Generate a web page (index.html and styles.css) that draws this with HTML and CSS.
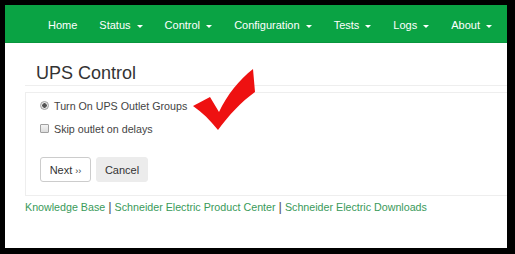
FILE: index.html
```html
<!DOCTYPE html>
<html lang="en">
<head>
    <meta charset="UTF-8">
    <meta name="viewport" content="width=device-width, initial-scale=1.0">
    <title>UPS Control</title>
    <link rel="stylesheet" href="styles.css">
</head>
<body>

    <div class="page">
        <nav class="navbar">
            <ul class="nav">
                <li><a href="#">Home</a></li>
                <li><a href="#">Status <span class="caret"></span></a></li>
                <li><a href="#">Control <span class="caret"></span></a></li>
                <li><a href="#">Configuration <span class="caret"></span></a></li>
                <li><a href="#">Tests <span class="caret"></span></a></li>
                <li><a href="#">Logs <span class="caret"></span></a></li>
                <li><a href="#">About <span class="caret"></span></a></li>
            </ul>
        </nav>

        <div class="content">
            <h1 class="page-title">UPS Control</h1>

            <form class="panel">
                <label class="option">
                    <input type="radio" name="action" checked>
                    Turn On UPS Outlet Groups
                </label>
                <label class="option">
                    <input type="checkbox">
                    Skip outlet on delays
                </label>
                <div class="actions">
                    <button type="button" class="btn btn-default">Next <span class="raquo">&rsaquo;&rsaquo;</span></button>
                    <button type="button" class="btn btn-cancel">Cancel</button>
                </div>
            </form>

            <p class="footer-links">
                <a href="#">Knowledge Base</a> <span class="sep">|</span>
                <a href="#">Schneider Electric Product Center</a> <span class="sep">|</span>
                <a href="#">Schneider Electric Downloads</a>
            </p>
        </div>

        <!-- annotation mark over the page -->
        <svg class="checkmark" width="70" height="70" viewBox="0 0 70 70">
            <path d="M0,38 L17,29 L26,44 C34,27 46,12 60,1 L62,24 C48,34 36,47 25,62 C17,52 9,44 0,38 Z" fill="#ee1111"/>
        </svg>
    </div>

</body>
</html>
```

FILE: styles.css
```css
body {
    margin: 0;
    padding: 0;
    background-color: #000;
    font-family: "Liberation Sans", Arial, sans-serif;
    font-size: 10.7px;
    color: #444;
}

.page {
    position: relative;
    margin: 5px 0 0 5px;
    width: 502px;
    height: 243px;
    background-color: #fff;
    overflow: hidden;
}

.navbar {
    height: 37px;
    background-color: #0aa344;
    border-bottom: 1px solid #09963e;
}

.nav {
    display: flex;
    list-style: none;
    margin: 0;
    padding: 0 0 0 32px;
}

.nav a {
    display: block;
    padding: 4px 11px 0 11px;
    line-height: 33px;
    font-size: 11px;
    color: #fff;
    text-decoration: none;
}

.caret {
    display: inline-block;
    width: 0;
    height: 0;
    margin-left: 3px;
    vertical-align: middle;
    border-top: 3px solid #fff;
    border-left: 3px solid transparent;
    border-right: 3px solid transparent;
}

.content {
    padding-left: 20px;
}

.page-title {
    margin: 20px 0 0 0;
    padding: 0 0 2px 11px;
    font-size: 18px;
    font-weight: normal;
    line-height: 20px;
    color: #333;
    border-bottom: 1px solid #eee;
}

.panel {
    margin: 6px -20px 0 0;
    padding: 1px 14px 13px 14px;
    border: 1px solid #eee;
    border-right: none;
}

.option {
    display: flex;
    align-items: center;
    height: 23px;
}

.option input {
    appearance: none;
    width: 9px;
    height: 9px;
    margin: 0 5px 0 0;
    border: 1px solid #a0a0a0;
    background: linear-gradient(#f4f4f4, #dcdcdc);
}

.option input[type="radio"] {
    border-radius: 50%;
}

.option input[type="radio"]:checked {
    background: radial-gradient(circle, #555 0, #555 2px, #e6e6e6 2.5px);
}

.option input[type="checkbox"] {
    border-radius: 1px;
}

.actions {
    display: flex;
    gap: 5px;
    margin-top: 17px;
}

.btn {
    height: 25px;
    padding: 0;
    font-family: inherit;
    font-size: 11px;
    color: #333;
    white-space: nowrap;
    border-radius: 3px;
    cursor: pointer;
}

.btn-default {
    width: 51px;
    background-color: #fff;
    border: 1px solid #ccc;
}

.btn-cancel {
    width: 52px;
    background-color: #ececec;
    border: 1px solid #ececec;
}

.raquo {
    font-size: 9px;
}

.footer-links {
    margin: 3px 0 0 0;
    line-height: 16px;
    color: #555;
}

.footer-links a {
    color: #3a9a5a;
    text-decoration: none;
}

.sep {
    font-size: 13px;
}

.checkmark {
    position: absolute;
    left: 188px;
    top: 63px;
}
```
